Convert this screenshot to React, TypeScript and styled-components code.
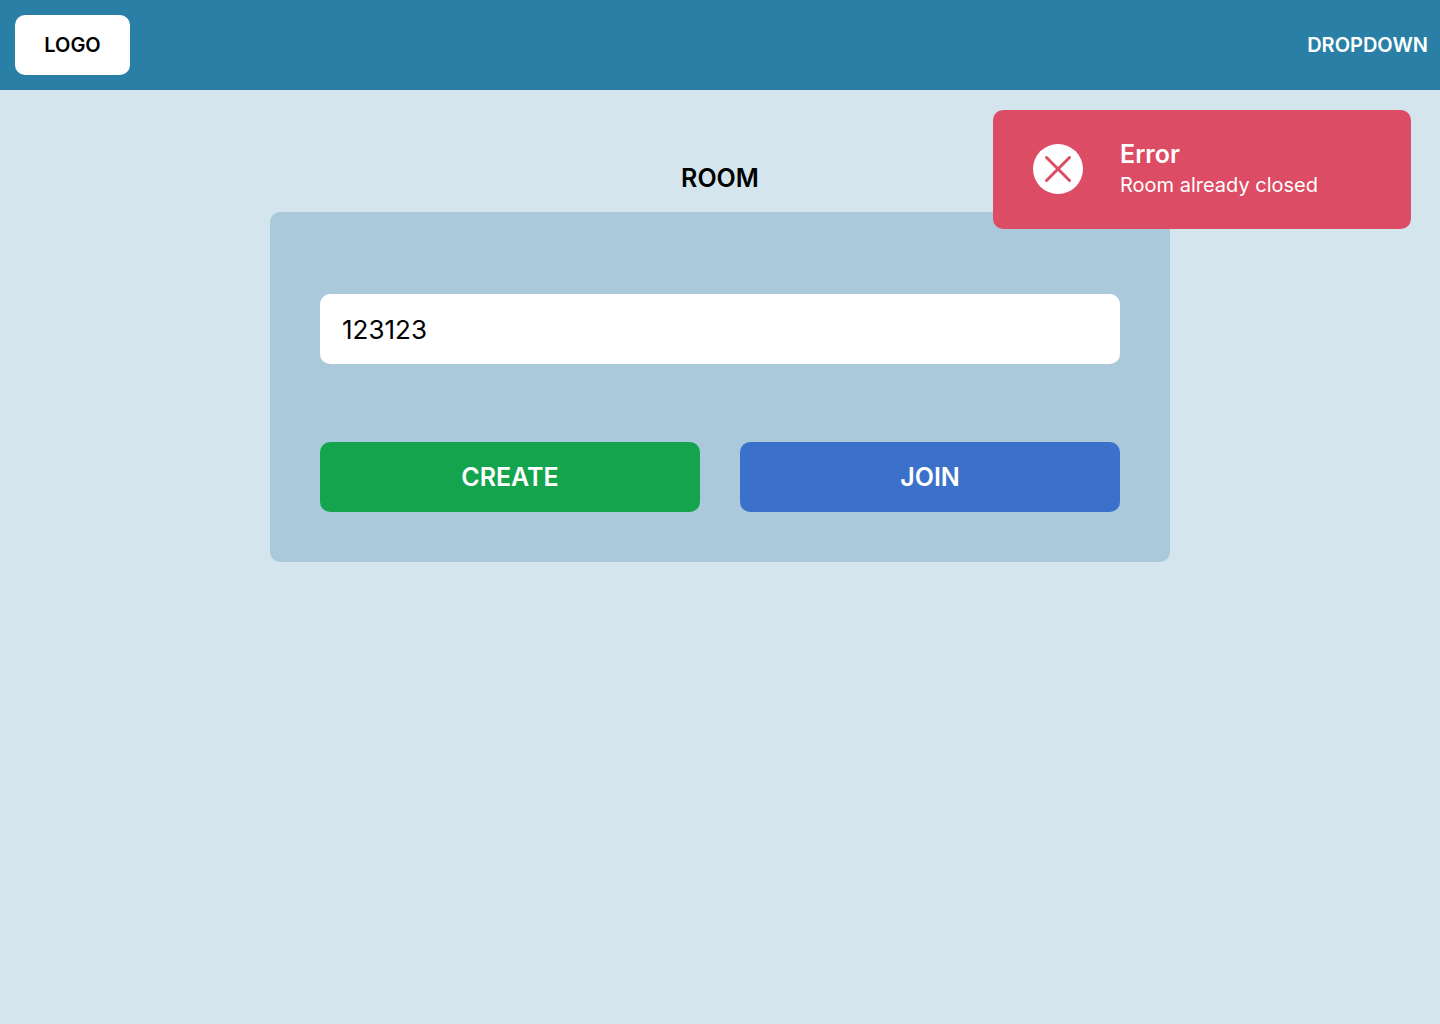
import React, { useState } from "react";
import styled, { createGlobalStyle } from "styled-components";

const GlobalStyle = createGlobalStyle`
  *, *::before, *::after { box-sizing: border-box; }
  body {
    margin: 0;
    background: #d4e5ed;
    color: #000;
    font-family: Inter, "Liberation Sans", sans-serif;
  }
  button, input { font-family: inherit; }
`;

const Page = styled.div`
  min-height: 100vh;
`;

const Header = styled.header`
  display: flex;
  align-items: center;
  justify-content: space-between;
  height: 90px;
  padding: 0 12px 0 15px;
  background: #297fa6;
`;

const Logo = styled.a`
  display: flex;
  align-items: center;
  justify-content: center;
  width: 115px;
  height: 60px;
  border-radius: 10px;
  background: #fff;
  color: #000;
  font-size: 20px;
  font-weight: 600;
  text-decoration: none;
`;

const MenuButton = styled.button`
  padding: 0;
  border: 0;
  background: none;
  color: #fff;
  font-size: 20px;
  font-weight: 600;
  cursor: pointer;
`;

const Main = styled.main`
  display: flex;
  flex-direction: column;
  align-items: center;
  gap: 18px;
  padding: 72px 20px 40px;
`;

const Title = styled.h1`
  margin: 0;
  font-size: 25px;
  font-weight: 600;
  line-height: 32px;
`;

const RoomForm = styled.form`
  display: flex;
  flex-direction: column;
  gap: 78px;
  width: 100%;
  max-width: 900px;
  padding: 82px 50px 50px;
  border-radius: 10px;
  background: #aacadb;
`;

const RoomInput = styled.input`
  width: 100%;
  height: 70px;
  padding: 0 22px;
  border: 0;
  border-radius: 10px;
  background: #fff;
  color: #000;
  font-size: 26px;
  font-weight: 400;
`;

const Actions = styled.div`
  display: grid;
  grid-template-columns: 1fr 1fr;
  gap: 40px;
`;

const ActionButton = styled.button<{ $color: string }>`
  height: 70px;
  padding: 0;
  border: 0;
  border-radius: 10px;
  background: ${({ $color }) => $color};
  color: #fff;
  font-size: 25px;
  font-weight: 600;
  line-height: 32px;
  cursor: pointer;
`;

const Toast = styled.div`
  position: absolute;
  top: 110px;
  right: 29px;
  display: flex;
  align-items: center;
  gap: 37px;
  width: 418px;
  padding: 28px 40px 29px;
  border-radius: 10px;
  background: #dc4c64;
  color: #fff;
`;

const ToastIcon = styled.svg`
  flex: none;
  width: 50px;
  height: 50px;
`;

const ToastTitle = styled.div`
  font-size: 25px;
  font-weight: 600;
  line-height: 32px;
`;

const ToastMessage = styled.div`
  font-size: 20px;
  font-weight: 400;
  line-height: 30px;
`;

export default function App() {
  const [room, setRoom] = useState("123123");

  return (
    <Page>
      <GlobalStyle />
      <Header>
        <Logo href="#">LOGO</Logo>
        <MenuButton type="button" aria-haspopup="menu">DROPDOWN</MenuButton>
      </Header>
      <Main>
        <Title>ROOM</Title>
        <RoomForm onSubmit={(event) => event.preventDefault()}>
          <RoomInput
            aria-label="Room"
            value={room}
            onChange={(event) => setRoom(event.target.value)}
          />
          <Actions>
            <ActionButton type="button" $color="#14a44d">CREATE</ActionButton>
            <ActionButton type="submit" $color="#3b71ca">JOIN</ActionButton>
          </Actions>
        </RoomForm>
      </Main>
      <Toast role="alert">
        <ToastIcon viewBox="0 0 50 50" aria-hidden="true">
          <circle cx="25" cy="25" r="25" fill="#fff" />
          <path
            d="M13.5 13.5L36.5 36.5M36.5 13.5L13.5 36.5"
            stroke="#dc4c64"
            strokeWidth="3"
            strokeLinecap="round"
          />
        </ToastIcon>
        <div>
          <ToastTitle>Error</ToastTitle>
          <ToastMessage>Room already closed</ToastMessage>
        </div>
      </Toast>
    </Page>
  );
}
